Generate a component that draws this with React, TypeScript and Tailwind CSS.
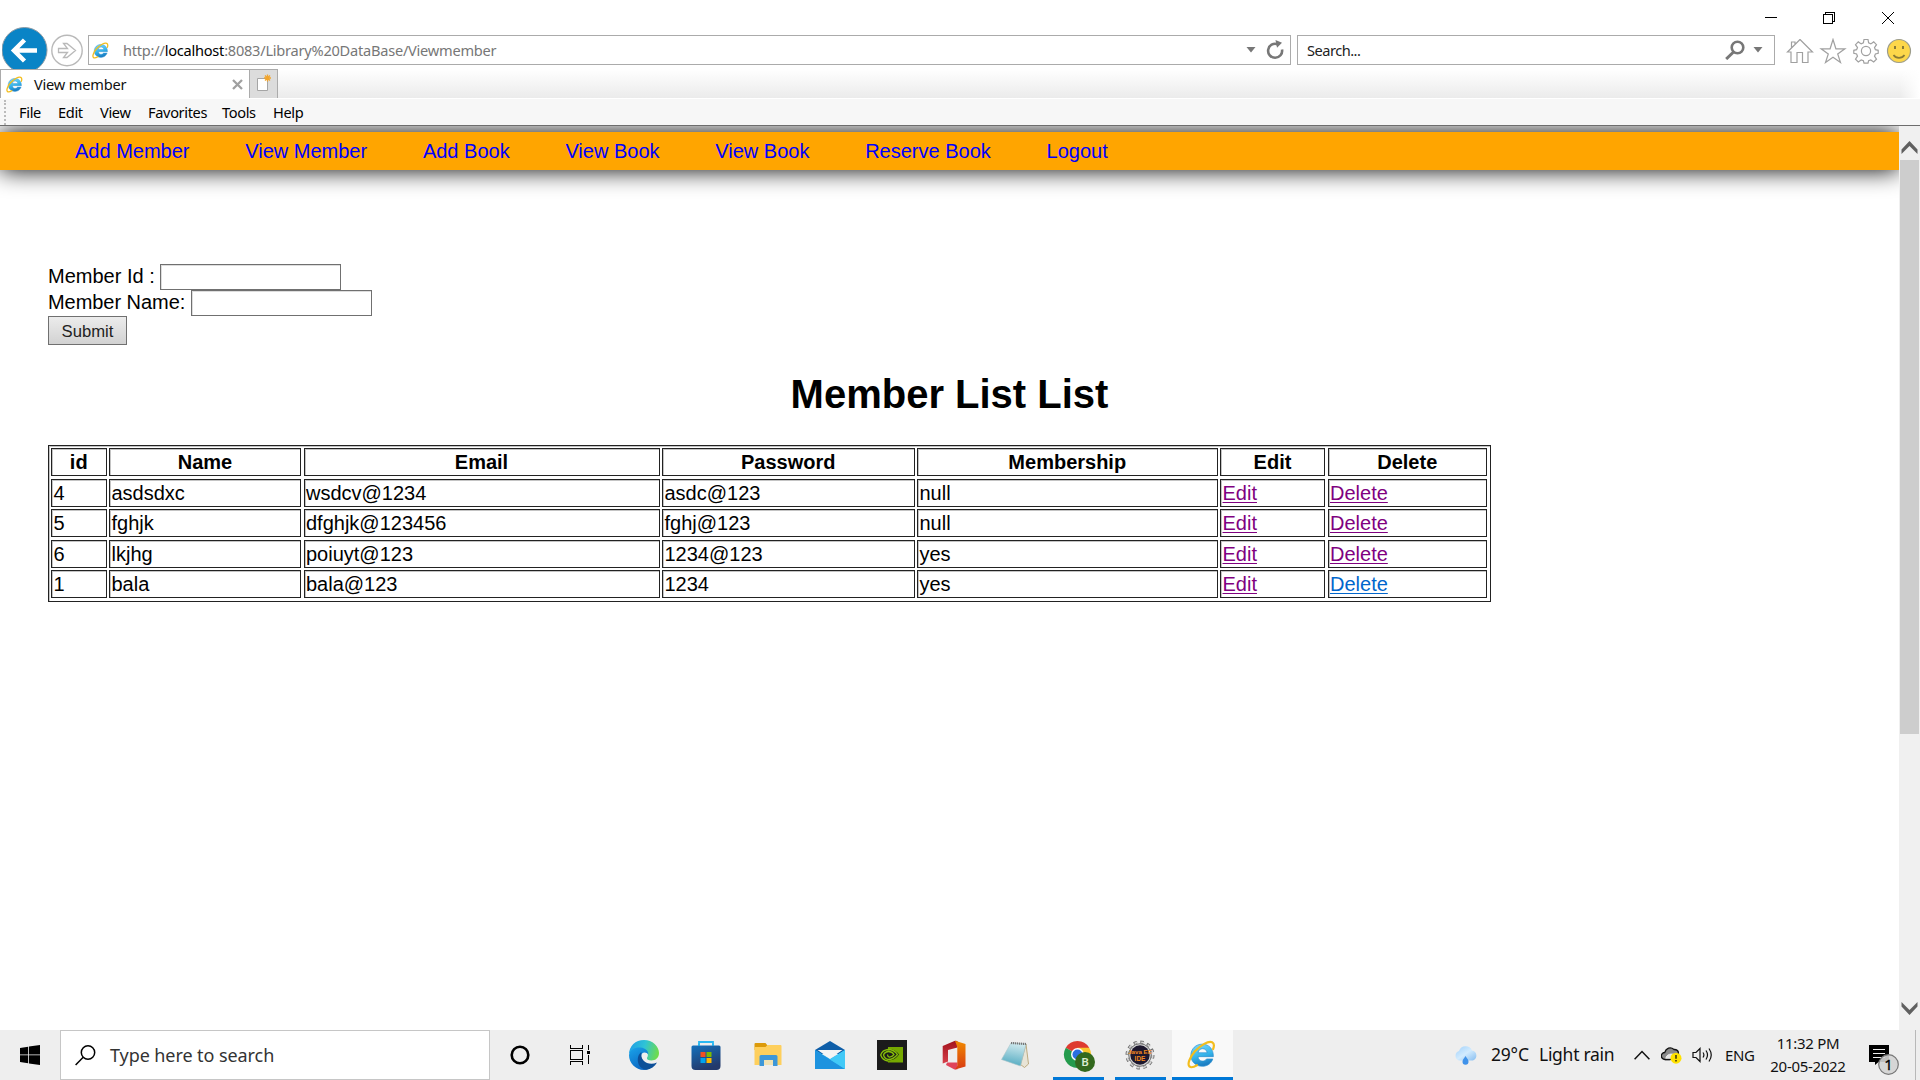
import React from "react";

const ui = "font-['Noto_Sans','Open_Sans',sans-serif]";

function IELogo({ size, id }: { size: number; id: string }) {
  return (
    <svg width={size} height={size} viewBox="0 0 30 30" className="shrink-0">
      <defs>
        <linearGradient id={id} x1="0" y1="0" x2="0.3" y2="1">
          <stop offset="0" stopColor="#7fdcff" />
          <stop offset="0.6" stopColor="#36b4ea" />
          <stop offset="1" stopColor="#1b7fc4" />
        </linearGradient>
      </defs>
      <path
        d="M27.300 17.200H11.400c.3 3 2.200 4.600 4.700 4.600 1.900 0 3.200-.8 4.100-2.200h6.500c-1.600 4.800-5.700 7.600-10.800 7.600C9 27.200 4 22.500 4 15.900 4 9 9.300 4.300 15.700 4.300c7 0 11.700 4.800 11.600 12.900zM20.800 13.200c-.3-2.600-2.200-4.200-4.700-4.200-2.400 0-4.200 1.500-4.700 4.200z"
        fill={`url(#${id})`}
        stroke="#2b8fd0"
        strokeWidth="0.700"
      />
      <path
        d="M27 9.500c1.200-3.300 1-6.200-1-7.200C22.200.6 14 5.300 8 12 2.700 18 .2 25 2.500 27.300c1.500 1.500 4.500.8 7.800-1.200"
        fill="none"
        stroke="#f3bd1d"
        strokeWidth="2.300"
        strokeLinecap="round"
      />
    </svg>
  );
}

function TitleBar() {
  return (
    <div className="flex h-[27px] items-start justify-end pt-[11px] pr-[26px]">
      <svg width="130" height="14" viewBox="0 0 130 14" fill="none" stroke="#000" shapeRendering="crispEdges">
        <path d="M1 6.500h12" />
        <path d="M59.500 3.500h9v9h-9zM61.500 3.500v-2h9v9h-2" />
        <path d="M118 1l12 12M130 1l-12 12" shapeRendering="auto" />
      </svg>
    </div>
  );
}

function Caret() {
  return (
    <svg width="10" height="6" viewBox="0 0 10 6">
      <path d="M0.500 0h9L5 5.500z" fill="#777" />
    </svg>
  );
}

function AddressRow() {
  return (
    <div className="flex h-[42px] items-start overflow-hidden">
      <svg width="46" height="46" viewBox="0 0 46 46" className="ml-[2px] shrink-0">
        <circle cx="22.500" cy="23" r="22.500" fill="#0a84c6" stroke="#8a9aa5" strokeWidth="1" />
        <path d="M35 23.500H12.500M22.500 13L12 23.500 22.500 34" fill="none" stroke="#fff" strokeWidth="4.500" />
      </svg>
      <svg width="33" height="34" viewBox="0 0 33 34" className="mt-[6px] ml-[3px] shrink-0" fill="none" stroke="#b9b9b9">
        <circle cx="16" cy="17.500" r="15.200" strokeWidth="1.400" />
        <path d="M7.500 15.500h9l-4-5h3.500l8.500 7-8.500 7h-3.500l4-5h-9z" strokeWidth="1.300" />
      </svg>
      <div className="mt-[8px] ml-[4px] flex h-[30px] w-[1203px] shrink-0 items-center border border-[#ababab] bg-white pl-[3px]">
        <IELogo size={17} id="ie-address" />
        <span className={`${ui} ml-[14px] text-[14.600px] leading-none whitespace-pre text-[#777] tracking-[-0.240px]`}>
          http://<span className="text-black">localhost</span>:8083/Library%20DataBase/Viewmember
        </span>
        <div className="mr-[5px] ml-auto flex items-center gap-[9px]">
          <Caret />
          <svg width="20" height="20" viewBox="0 0 20 20">
            <path d="M12.500 4.200A7 7 0 1 0 17 9.500" fill="none" stroke="#777" strokeWidth="2.600" />
            <path d="M10.500 0l6.500 2.800-5 5z" fill="#777" />
          </svg>
        </div>
      </div>
      <div className="mt-[8px] ml-[6px] flex h-[30px] w-[478px] shrink-0 items-center border border-[#ababab] bg-white pl-[9px]">
        <span className={`${ui} text-[14.600px] leading-none tracking-[-0.500px] text-[#222]`}>Search...</span>
        <div className="mr-[11px] ml-auto flex items-center gap-[8px]">
          <svg width="20" height="20" viewBox="0 0 20 20" fill="none" stroke="#777">
            <circle cx="12.500" cy="7.500" r="5.800" strokeWidth="2.600" />
            <path d="M8.500 12L1.200 19" strokeWidth="3" />
          </svg>
          <Caret />
        </div>
      </div>
      <svg width="126" height="26" viewBox="0 0 126 26" className="mt-[11px] ml-[11px] shrink-0" fill="none" stroke="#a0a0a0" strokeWidth="1.200">
        <path d="M14 1.500L1.500 14H5v10.500h6V14.500h5.500v10H22V14H26.500L14 1.500M5.500 9.500V4H9v2.500" />
        <path d="M47 1.500l2.900 9.300h9l-7.200 5.200 2.800 8.500-7.500-5.200-7.500 5.200 2.800-8.500-7.200-5.200h9z" />
        <circle cx="80" cy="13" r="4.600" />
        <path d="M78 1.500h4l.6 3.400 2.200 1 2.900-2 2.800 2.800-2 2.900.9 2.100 2.800.6v3l-2.800.7-.9 2.200 2 2.900-2.800 2.800-2.900-2-2.200.9-.6 2.300h-4l-.6-2.300-2.200-.9-2.900 2-2.800-2.800 2-2.900-.9-2.200-2.800-.7v-3l2.800-.6.9-2.100-2-2.900 2.800-2.800 2.900 2 2.200-1z" />
        <circle cx="113" cy="13" r="11.500" fill="#fdd74a" stroke="#9c9c8c" />
        <path d="M109 8v3M117 8v3" stroke="#8a7a35" strokeWidth="2" />
        <path d="M107.500 17c2.500 3.800 8.500 3.800 11 0" stroke="#8a7a35" strokeWidth="1.600" />
      </svg>
    </div>
  );
}

function TabRow() {
  return (
    <div className="flex h-[29px] bg-linear-to-b from-white to-[#ebebeb]">
      <div className="flex w-[250px] items-center border-x border-t border-[#ababab] bg-white pl-[5px]">
        <IELogo size={17} id="ie-tab" />
        <span className={`${ui} ml-[11px] text-[14.600px] leading-none tracking-[-0.200px] text-[#111]`}>View member</span>
        <svg width="11" height="11" viewBox="0 0 11 11" className="mr-[6px] ml-auto">
          <path d="M1 1l9 9M10 1l-9 9" stroke="#a0a0a0" strokeWidth="2.300" />
        </svg>
      </div>
      <div className="flex w-[28px] items-center justify-center border-t border-r border-[#ababab] bg-[#dcdcdc]">
        <svg width="16" height="18" viewBox="0 0 16 18" className="relative top-[-1px]">
          <path d="M1.500 4.500h10v12h-10z" fill="#fff" stroke="#a5a5a5" />
          <path d="M11.500 0.500v7M8 4h7M9 1.500l5 5M14 1.500l-5 5" stroke="#f2a52c" strokeWidth="1.300" />
        </svg>
      </div>
      <div className="ml-auto w-[20px] bg-linear-to-r from-transparent to-white" />
    </div>
  );
}

const menus = [
  { label: "File", cls: "w-[39px]" },
  { label: "Edit", cls: "w-[42px]" },
  { label: "View", cls: "w-[48px]" },
  { label: "Favorites", cls: "w-[74px]" },
  { label: "Tools", cls: "w-[51px]" },
  { label: "Help", cls: "w-[40px]" },
];

function MenuRow() {
  return (
    <div className="flex h-[28px] items-center border-t border-b border-t-white border-b-[#6d6d6d] bg-[#f7f7f7] pl-[4px]">
      <div className="h-[25px] border-l-2 border-dotted border-[#bbb]" />
      <div className={`${ui} ml-[13px] flex text-[14.600px] leading-none tracking-[-0.350px] text-black`}>
        {menus.map((m) => (
          <span key={m.label} className={m.cls}>{m.label}</span>
        ))}
      </div>
    </div>
  );
}

const links = ["Add Member", "View Member", "Add Book", "View Book", "View Book", "Reserve Book", "Logout"];

const headers = ["id", "Name", "Email", "Password", "Membership", "Edit", "Delete"];
const rows = [
  ["4", "asdsdxc", "wsdcv@1234", "asdc@123", "null"],
  ["5", "fghjk", "dfghjk@123456", "fghj@123", "null"],
  ["6", "lkjhg", "poiuyt@123", "1234@123", "yes"],
  ["1", "bala", "bala@123", "1234", "yes"],
];

const cell = "flex items-center border border-[#222] px-[1.500px] leading-none shadow-[inset_1px_1px_0_#c4c4c4]";
const link = "underline decoration-1 underline-offset-[2px] [text-decoration-skip-ink:none]";

function MemberTable() {
  return (
    <table className="mt-[31px] ml-[48px] grid w-[1443px] grid-cols-[55.500px_192px_356px_252.500px_300.500px_105px_159.500px] grid-rows-[repeat(5,28px)] gap-[2.500px] border border-[#222] px-[2px] pt-[2px] pb-[3px] shadow-[inset_1px_1px_0_#c4c4c4]">
      <thead className="contents">
        <tr className="contents">
          {headers.map((h) => (
            <th key={h} className={`${cell} justify-center font-bold`}>{h}</th>
          ))}
        </tr>
      </thead>
      <tbody className="contents">
        {rows.map((r, i) => (
          <tr key={r[0]} className="contents">
            {r.map((v, j) => (
              <td key={j} className={cell}>{v}</td>
            ))}
            <td className={`${cell} text-[#800080]`}><a className={link}>Edit</a></td>
            <td className={`${cell} ${i === 3 ? "text-[#0066cc]" : "text-[#800080]"}`}><a className={link}>Delete</a></td>
          </tr>
        ))}
      </tbody>
    </table>
  );
}

function Page() {
  return (
    <div className="h-[904px] w-[1899px] overflow-hidden bg-white font-['Liberation_Sans',Arial,sans-serif] text-[20px] text-black">
      <nav className="mt-[6px] flex h-[38px] items-center gap-[55.750px] bg-[#ffa500] pl-[75px] leading-none text-[#0000ff] shadow-[0_0_25px_#000]">
        {links.map((l, i) => (
          <a key={i}>{l}</a>
        ))}
      </nav>
      <form className="mt-[94px] ml-[48px] leading-none">
        <div className="flex h-[26px] items-center">
          <label className="w-[112px] pb-[2px] whitespace-pre">Member Id :</label>
          <input className="h-[26px] w-[181px] border border-[#707070] shadow-[inset_1px_1px_0_#ddd]" />
        </div>
        <div className="flex h-[26px] items-center">
          <label className="w-[143px] pb-[2px] tracking-[-0.050px]">Member Name:</label>
          <input className="h-[26px] w-[181px] border border-[#707070] shadow-[inset_1px_1px_0_#ddd]" />
        </div>
        <button type="button" className="flex h-[29px] w-[79px] items-center justify-center border border-[#707070] bg-linear-to-b from-[#ececec] to-[#d2d2d2] pt-[3px] text-[16.670px] text-[#222]">
          Submit
        </button>
      </form>
      <h1 className="mt-[29px] text-center text-[40px] leading-[40px] font-bold">Member List List</h1>
      <MemberTable />
    </div>
  );
}

function Scrollbar() {
  return (
    <div className="flex w-[21px] flex-col items-center bg-[#f0f0f0]">
      <svg width="17" height="14" viewBox="0 0 17 14" className="mt-[15px]">
        <path d="M0.500 8.500L8.500 0l8 8.500V13l-8-8-8 8z" fill="#606060" />
      </svg>
      <div className="mt-[5px] h-[574px] w-[19px] bg-[#cdcdcd]" />
      <svg width="17" height="14" viewBox="0 0 17 14" className="mt-auto mb-[15px]">
        <path d="M0.500 5.500l8 8.500 8-8.500V1l-8 8-8-8z" fill="#606060" />
      </svg>
    </div>
  );
}

function EdgeIcon() {
  return (
    <svg width="30" height="30" viewBox="0 0 30 30">
      <defs>
        <linearGradient id="edge-top" x1="0" y1="0.300" x2="1" y2="0.500">
          <stop offset="0" stopColor="#1f9fe6" />
          <stop offset="0.500" stopColor="#2fc3d6" />
          <stop offset="1" stopColor="#6fdc4a" />
        </linearGradient>
        <linearGradient id="edge-left" x1="0" y1="0" x2="0.600" y2="1">
          <stop offset="0" stopColor="#1aa4ea" />
          <stop offset="1" stopColor="#0a63c0" />
        </linearGradient>
      </defs>
      <path d="M0 14.500C0 6 6.500 0 15 0s15 6.300 15 13c0 4.800-3.500 7.500-7.500 7.500-3.300 0-5-1.500-4.500-2.800 2-2.500.8-7.700-5-7.700C6 10 0 12.500 0 14.500z" fill="url(#edge-top)" />
      <path d="M0 15C1 9.500 6 7 11.500 7.500c5.500.5 8 4 7.800 7-1.500-2.700-7.300-3.500-7.300 2.500 0 6 6 10.500 12 8.500C21.500 28.500 18.500 30 15 30 6.500 30 0 23 0 15z" fill="url(#edge-left)" />
      <path d="M12.500 12.300C7 15 7 28 17 29.800c5-.6 8.800-3.300 11-7.300-5 2.300-10.500 1.200-13.300-1.700-2.500-2.700-2.700-6-2.200-8.500z" fill="#0c4f98" />
    </svg>
  );
}

function StoreIcon() {
  return (
    <svg width="30" height="30" viewBox="0 0 30 30">
      <defs>
        <linearGradient id="store" x1="0" y1="0" x2="0.400" y2="1">
          <stop offset="0" stopColor="#1471bd" />
          <stop offset="1" stopColor="#23396b" />
        </linearGradient>
      </defs>
      <path d="M8 6V2h14v4" fill="none" stroke="#29b8f2" strokeWidth="1.800" />
      <path d="M.5 7a1.500 1.500 0 0 1 1.500-1.500h26A1.500 1.500 0 0 1 29.500 7V26a4 4 0 0 1-4 4h-21a4 4 0 0 1-4-4z" fill="url(#store)" />
      <path d="M8 5.500V3.500M22 5.500V3.500" stroke="#29b8f2" strokeWidth="1.800" />
      <path d="M9.500 12h5v5h-5z" fill="#f25022" />
      <path d="M15.500 12h5v5h-5z" fill="#7fba00" />
      <path d="M9.500 18h5v5h-5z" fill="#00a4ef" />
      <path d="M15.500 18h5v5h-5z" fill="#ffb900" />
    </svg>
  );
}

function FolderIcon() {
  return (
    <svg width="30" height="30" viewBox="0 0 30 30">
      <path d="M1.500 4a1 1 0 0 1 1-1h10l2 2.500V10h-13z" fill="#dc9a0a" />
      <path d="M1.500 7h11l2-2H27.500a1 1 0 0 1 1 1v19h-27z" fill="#fecf5c" />
      <path d="M6.500 26V16.500a1.500 1.500 0 0 1 1.500-1.500h15a1.500 1.500 0 0 1 1.500 1.500V26h-4.500v-6h-9v6z" fill="#3d97d8" />
      <path d="M11 20h9v5h-9z" fill="#f0e2b4" />
    </svg>
  );
}

function MailIcon() {
  return (
    <svg width="30" height="30" viewBox="0 0 30 30">
      <path d="M0 10L15 1l15 9v4H0z" fill="#0e5ea8" />
      <path d="M0 10l15 9L30 10v19H0z" fill="#36bdf2" />
      <path d="M2.500 10h25L15 18.500z" fill="#f4f4f4" />
      <path d="M0 29V10l30 19z" fill="#1d93df" />
      <path d="M15 19.500L30 29V10z" fill="#41c9f7" />
    </svg>
  );
}

function NvidiaIcon() {
  return (
    <svg width="30" height="30" viewBox="0 0 30 30">
      <path d="M0 0h30v30H0z" fill="#1b1b1b" />
      <path d="M11 7h15v15.500H11z" fill="#76a900" />
      <path d="M11 9c6 0 9 3 11 5.500-2 3-6 6-11 6z" fill="#1b1b1b" />
      <path d="M11 9.500c-4 .5-6.500 3-7.300 5.500 1 3 4 5.500 7.300 6M11 9.500c5 0 7.500 2 9.500 5-2.500 3-5.500 5-9 5-2.500-.5-4.500-2.500-5-4.700 1-2 3-3.300 5-3.300 3 0 4.500 1.500 5.500 3-1.500 1.800-3 2.800-5 2.500-1.200-.5-1.500-1.500-1.500-2.500" fill="none" stroke="#86bd08" strokeWidth="1.300" />
    </svg>
  );
}

function OfficeIcon() {
  return (
    <svg width="30" height="30" viewBox="0 0 30 30">
      <defs>
        <linearGradient id="office" x1="0" y1="0" x2="0" y2="1">
          <stop offset="0" stopColor="#f08a00" />
          <stop offset="1" stopColor="#d83a12" />
        </linearGradient>
        <linearGradient id="office-left" x1="0" y1="0" x2="0" y2="1">
          <stop offset="0" stopColor="#a3121c" />
          <stop offset="1" stopColor="#d6404a" />
        </linearGradient>
      </defs>
      <path d="M8 22.500h10.500v6.700l-3 .3L7 25z" fill="#e0435a" />
      <path d="M16 .8L3.700 6v17.500L9 21.500V10l9.500-2.500V1z" fill="url(#office-left)" />
      <path d="M16 .8L26.500 4v22.500l-10.500 3 2.300-3.500V7z" fill="url(#office)" />
    </svg>
  );
}

function NotepadIcon() {
  return (
    <svg width="30" height="30" viewBox="0 0 30 30">
      <defs>
        <linearGradient id="note" x1="0.500" y1="0" x2="0.300" y2="1">
          <stop offset="0" stopColor="#cfe9ee" />
          <stop offset="1" stopColor="#4fa9c0" />
        </linearGradient>
      </defs>
      <path d="M26 4l2.500 20-4 3.500-4-3z" fill="#e8e4d6" stroke="#b09a68" strokeWidth="0.800" />
      <path d="M11 3L26 4l-5.500 22L1.500 19.500z" fill="url(#note)" stroke="#a9c4ca" strokeWidth="0.600" />
      <path d="M11 3l15 1" stroke="#777" strokeWidth="2.200" strokeDasharray="1.200 0.800" />
    </svg>
  );
}

function ChromeIcon() {
  return (
    <svg width="34" height="34" viewBox="0 0 34 34" className="relative top-[2px]">
      <path d="M14.500 14.500L2.800 7.700A13.500 13.500 0 0 1 26.200 7.700z" fill="#de3b30" />
      <path d="M14.500 14.500L2.800 7.700A13.500 13.500 0 0 0 14.500 28z" fill="#249b4c" />
      <path d="M14.500 14.500L14.500 28A13.500 13.500 0 0 0 26.200 7.700H14.500z" fill="#f9c62e" />
      <circle cx="14.500" cy="14.500" r="6.500" fill="#fff" />
      <circle cx="14.500" cy="14.500" r="5" fill="#2a6fe0" />
      <circle cx="22" cy="22" r="10" fill="#33691e" />
      <text x="22" y="26" textAnchor="middle" fontSize="11.500" fontWeight="600" fill="#dcecd0" fontFamily="Noto Sans">B</text>
    </svg>
  );
}

function EclipseIcon() {
  return (
    <svg width="30" height="30" viewBox="0 0 30 30">
      <circle cx="15" cy="15" r="13" fill="none" stroke="#6e6e6e" strokeWidth="3" strokeDasharray="3.400 3.400" />
      <circle cx="15" cy="15" r="12.800" fill="none" stroke="#d8d8d8" strokeWidth="1.600" strokeDasharray="3.400 3.400" />
      <circle cx="15" cy="15" r="11.300" fill="#d4d4d4" stroke="#666" strokeWidth="0.900" />
      <circle cx="15" cy="15" r="9.700" fill="#1d182e" />
      <text x="15" y="13.800" textAnchor="middle" fontSize="6.200" fontWeight="700" fill="#f58a1e" fontFamily="Liberation Sans">Java EE</text>
      <text x="15" y="20.500" textAnchor="middle" fontSize="6.500" fontWeight="700" fill="#f58a1e" fontFamily="Liberation Sans">IDE</text>
    </svg>
  );
}

const apps = [
  { node: <EdgeIcon />, cls: "w-[62px]" },
  { node: <StoreIcon />, cls: "w-[62px]" },
  { node: <FolderIcon />, cls: "w-[62px]" },
  { node: <MailIcon />, cls: "w-[62px]" },
  { node: <NvidiaIcon />, cls: "w-[62px]" },
  { node: <OfficeIcon />, cls: "w-[62px]" },
  { node: <NotepadIcon />, cls: "w-[68px] pr-[8px]" },
  { node: <ChromeIcon />, cls: "mr-[11px] w-[51px] border-b-3 border-[#0078d7] pt-[3px] pl-[3px]" },
  { node: <EclipseIcon />, cls: "mr-[6px] w-[51px] border-b-3 border-[#0078d7] pt-[3px] pr-[2px]" },
  { node: <IELogo size={29} id="ie-task" />, cls: "w-[61px] border-b-3 border-[#0078d7] bg-[#f9f9f9] pt-[2px] pr-[2px]" },
];

function Taskbar() {
  return (
    <div className={`${ui} flex h-[50px] items-center bg-[#eeeeee] leading-none text-[#111]`}>
      <svg width="20" height="20" viewBox="0 0 20 20" className="ml-[20px]">
        <path d="M0 2.900l8.200-1.200v7.800H0zM9 1.600L20 0v9.500H9zM0 10.300h8.200v7.900L0 17zM9 10.300h11V20L9 18.400z" />
      </svg>
      <div className="ml-[20px] flex h-[50px] w-[430px] items-center border border-[#c6c6c6] bg-white pl-[14px]">
        <svg width="21" height="21" viewBox="0 0 21 21" fill="none" stroke="#000" strokeWidth="1.500">
          <circle cx="13" cy="7.500" r="6.700" />
          <path d="M8.200 12.300L.6 20" />
        </svg>
        <span className="ml-[14px] text-[18px] tracking-[-0.080px] text-[#333]">Type here to search</span>
      </div>
      <svg width="20" height="20" viewBox="0 0 20 20" className="ml-[20px]">
        <circle cx="10" cy="10" r="8.300" fill="none" stroke="#000" strokeWidth="2.600" />
      </svg>
      <svg width="20" height="20" viewBox="0 0 20 20" fill="none" stroke="#000" className="ml-[40px]" shapeRendering="crispEdges">
        <path d="M.5 0v3.500h12V0M.5 5.500h12v9H.5zM.5 19.500v-3h12v3M18.500 0v5M18.500 10v9" />
        <path d="M17 6h3v3h-3z" fill="#000" stroke="none" />
      </svg>
      <div className="ml-[23px] flex h-full">
        {apps.map((a, i) => (
          <div key={i} className={`box-border flex h-full items-center justify-center ${a.cls}`}>{a.node}</div>
        ))}
      </div>
      <div className="mr-[4px] ml-auto flex h-full items-center border-r border-[#b8b8b8]">
        <svg width="26" height="20" viewBox="0 0 26 20">
          <defs>
            <linearGradient id="cloud" x1="0" y1="0" x2="1" y2="1">
              <stop offset="0" stopColor="#9fd0fb" />
              <stop offset="0.500" stopColor="#d2ebfe" />
              <stop offset="1" stopColor="#86bdf0" />
            </linearGradient>
          </defs>
          <path d="M6 15.500a5 5 0 0 1 0-9.500A7 7 0 0 1 19 5.500a5.200 5.200 0 0 1 1 10z" fill="url(#cloud)" />
          <path d="M12.500 11c2 3 3 4 3 5.800a3 3 0 0 1-6 0C9.500 15 10.500 14 12.500 11z" fill="#3f92ea" />
        </svg>
        <span className="ml-[12px] w-[48px] text-[17.500px] tracking-[-0.200px]">29°C</span>
        <span className="w-[95px] text-[17.500px] tracking-[-0.280px] whitespace-nowrap">Light rain</span>
        <svg width="16" height="10" viewBox="0 0 16 10" fill="none" stroke="#111" strokeWidth="1.500">
          <path d="M.6 9.200L8 1.500l7.400 7.700" />
        </svg>
        <svg width="21" height="18" viewBox="0 0 21 18" className="ml-[11px]">
          <path d="M4 13.500a3.500 3.500 0 0 1-.3-7C5 2 9.500.5 13 3.500c3 0 4.500 2 4.500 4l-9 6z" fill="#8a8a8a" stroke="#111" strokeWidth="1.300" />
          <path d="M9.500 13.500H5c-1-4 4-6.500 8-5" fill="#e4e4e4" stroke="#eee" />
          <path d="M4 13.500h6" stroke="#111" strokeWidth="1.300" />
          <circle cx="15" cy="12.200" r="5.500" fill="#ffe100" />
          <path d="M15 9v3.800M15 14v1.400" stroke="#111" strokeWidth="1.300" />
        </svg>
        <svg width="22" height="18" viewBox="0 0 22 18" fill="none" stroke="#111" strokeWidth="1.200" className="ml-[10px]">
          <path d="M1 6.500h3L8 2.500v13L4 11.500H1zM11 6.500q1.800 2.500 0 5M14 4.500q3 4.500 0 9M17 2.500q4.500 6.500 0 13" />
        </svg>
        <span className="ml-[11px] w-[41px] text-[15px] tracking-[-0.400px]">ENG</span>
        <div className="flex w-[84px] flex-col items-center gap-[8px] text-[15px] tracking-[-0.300px] whitespace-nowrap">
          <span>11:32 PM</span>
          <span>20-05-2022</span>
        </div>
        <svg width="32" height="32" viewBox="0 0 32 32" className="mt-[8px] mr-[14px] ml-[19px]">
          <path d="M0 2h20v17H9.500l-3.500 3v-3H0z" fill="#000" />
          <path d="M4 6.500h12M4 10.500h12M4 14.500h12" stroke="#eee" strokeWidth="1.200" />
          <circle cx="19.500" cy="21.500" r="9.800" fill="#d3d3d3" fillOpacity="0.900" stroke="#777" strokeWidth="1.200" />
          <text x="19.500" y="26.800" textAnchor="middle" fontSize="15" fill="#000" stroke="#000" strokeWidth="0.300" fontFamily="Noto Sans">1</text>
        </svg>
      </div>
    </div>
  );
}

export default function App() {
  return (
    <div className="flex h-[1080px] w-[1920px] flex-col overflow-hidden bg-white">
      <TitleBar />
      <AddressRow />
      <TabRow />
      <MenuRow />
      <div className="flex h-[904px] overflow-hidden">
        <div className="flow-root h-full w-[1899px] overflow-hidden">
          <Page />
        </div>
        <Scrollbar />
      </div>
      <Taskbar />
    </div>
  );
}
